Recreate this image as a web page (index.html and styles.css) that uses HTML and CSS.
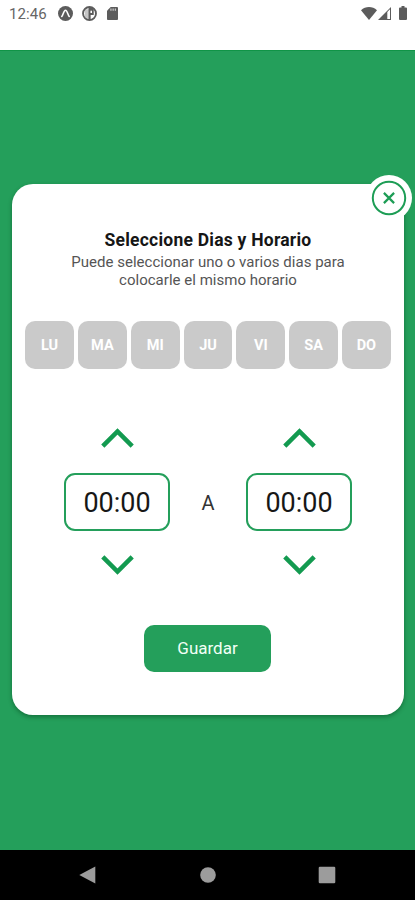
FILE: index.html
```html
<!DOCTYPE html>
<html lang="es">
<head>
<meta charset="utf-8">
<meta name="viewport" content="width=device-width, initial-scale=1">
<title>Seleccione Dias y Horario</title>
<link rel="stylesheet" href="styles.css">
</head>
<body>
<header class="status">
  <span class="clock">12:46</span>
  <svg class="status-icon expo" viewBox="0 0 16 16"><circle cx="8" cy="8" r="8" fill="#5c5c5c"/><path d="M4 11.200C5.400 9.600 6.200 4.500 8 4.500s2.600 5.100 4 6.700" fill="none" stroke="#fff" stroke-width="1.700" stroke-linecap="round"/></svg>
  <svg class="status-icon app" viewBox="0 0 16 16"><circle cx="8" cy="8" r="6.900" fill="#fff" stroke="#5c5c5c" stroke-width="2"/><path d="M3 3.500h5v10H5.500L3 11z" fill="#5c5c5c" opacity=".35"/><path d="M7 2h5.500v7.500H9.200V14H7z" fill="#5c5c5c"/><path d="M9 5h1.700v2.500H9z" fill="#fff"/></svg>
  <svg class="status-icon card-icon" viewBox="0 0 12 14"><path d="M4 0h7q1 0 1 1v12q0 1-1 1H1q-1 0-1-1V4z" fill="#5c5c5c"/><path d="M4.300 1.500v2.500M6.700 1.500v2.500M9.100 1.500v2.500" stroke="#ccc" stroke-width="1.300"/></svg>
  <div class="signals">
    <svg class="wifi" viewBox="0 0 16 13"><path d="M0 3.200C4.500-1 11.500-1 16 3.200L8 13z" fill="#5c5c5c"/></svg>
    <svg class="cell" viewBox="0 0 13 13"><path d="M0 13 13 0v13z" fill="#5c5c5c"/><path d="M9.300 5v7H12V2.300z" fill="#fff"/></svg>
    <svg class="battery" viewBox="0 0 8 14"><path d="M2.500 0h3v1.500H7q1 0 1 1V13q0 1-1 1H1q-1 0-1-1V2.500q0-1 1-1h1.500z" fill="#5c5c5c"/></svg>
  </div>
</header>
<main class="screen">
  <section class="card">
    <button class="close" aria-label="Cerrar"><svg viewBox="0 0 46 46"><circle cx="23" cy="23" r="16.200" fill="none" stroke="#1d9d55" stroke-width="2"/><path d="m17.900 17.900 10.200 10.200m0-10.200L17.900 28.100" fill="none" stroke="#1d9d55" stroke-width="2.200"/></svg></button>
    <h1 class="title">Seleccione Dias y Horario</h1>
    <p class="hint">Puede seleccionar uno o varios dias para<br>colocarle el mismo horario</p>
    <div class="days">
      <button class="day">LU</button><button class="day">MA</button><button class="day">MI</button><button class="day">JU</button><button class="day">VI</button><button class="day">SA</button><button class="day">DO</button>
    </div>
    <div class="times">
      <div class="picker">
        <svg class="arrow" viewBox="0 0 33 20"><path d="M1.800 18.200 16.500 3.500l14.700 14.700"/></svg>
        <div class="time">00:00</div>
        <svg class="arrow" viewBox="0 0 33 20"><path d="M1.800 1.800 16.500 16.500 31.200 1.800"/></svg>
      </div>
      <span class="to">A</span>
      <div class="picker">
        <svg class="arrow" viewBox="0 0 33 20"><path d="M1.800 18.200 16.500 3.500l14.700 14.700"/></svg>
        <div class="time">00:00</div>
        <svg class="arrow" viewBox="0 0 33 20"><path d="M1.800 1.800 16.500 16.500 31.200 1.800"/></svg>
      </div>
    </div>
    <button class="save">Guardar</button>
  </section>
</main>
<nav class="nav">
  <svg viewBox="0 0 18 18"><path d="M16.300.5v17L.3 9z"/></svg>
  <svg viewBox="0 0 18 18"><circle cx="9" cy="9" r="7.800"/></svg>
  <svg viewBox="0 0 18 18"><rect x=".7" y=".7" width="16.600" height="16.600" rx="1.200"/></svg>
</nav>
</body>
</html>
```
FILE: styles.css
```css
* { box-sizing: border-box; }
body {
  margin: 0;
  height: 900px;
  display: flex;
  flex-direction: column;
  font-family: Roboto, "Liberation Sans", sans-serif;
  background: #fff;
}
button { border: 0; padding: 0; font: inherit; }
svg { display: block; flex: none; }
.status {
  height: 50px;
  display: flex;
  align-items: flex-start;
  padding: 0 8px 0 9px;
}
.clock { width: 49px; font-size: 15px; line-height: 28px; letter-spacing: .1px; color: #666; }
.status-icon { width: 15px; height: 15px; margin-top: 6px; }
.app { margin-left: 9px; }
.card-icon { width: 11px; height: 13px; margin: 7px 0 0 10px; }
.signals { display: flex; margin: 7px 0 0 auto; }
.wifi { width: 16px; height: 13px; }
.cell { width: 13px; height: 13px; margin-left: 1px; }
.battery { width: 8px; height: 14px; margin-left: 8px; margin-top: -1px; }
.screen {
  height: 800px;
  padding: 134px 11px 0 12px;
  background: #249f5b;
  border-top: 1px solid #109447;
}
.card {
  position: relative;
  height: 531px;
  margin-top: -1px;
  padding-top: 45px;
  border-radius: 21px;
  background: #fff;
  box-shadow: 0 2px 4px rgba(0, 60, 25, .45);
  display: flex;
  flex-direction: column;
  align-items: center;
}
.close {
  position: absolute;
  top: -9px;
  right: -8px;
  width: 46px;
  height: 46px;
  border-radius: 50%;
  background: #fff;
}
.title { margin: 0; font-size: 17.500px; line-height: 22px; font-weight: 700; letter-spacing: .23px; color: #161616; }
.hint { margin: 2px 0 0; font-size: 15px; line-height: 18px; letter-spacing: .02px; text-align: center; color: #555; }
.days { display: flex; gap: 4px; margin-top: 32px; }
.day {
  width: 48.800px;
  height: 48px;
  border-radius: 10px;
  background: #cacaca;
  color: #fff;
  font-size: 14.500px;
  font-weight: 700;
}
.times { display: flex; align-items: center; margin-top: 59px; }
.picker { width: 106px; display: flex; flex-direction: column; align-items: center; }
.arrow { width: 33px; height: 20px; fill: none; stroke: #139a50; stroke-width: 4.500; }
.time {
  width: 106px;
  height: 58px;
  margin: 25px 0 24px;
  border: 2px solid #249f5b;
  border-radius: 11px;
  font-size: 27px;
  line-height: 56px;
  text-align: center;
  color: #171717;
}
.to { width: 76px; padding-top: 2px; text-align: center; font-size: 20px; color: #333; }
.save {
  width: 127px;
  height: 47px;
  margin: 50px 1px 0 0;
  padding-bottom: 1px;
  border-radius: 10px;
  background: #249f5b;
  color: #f2fff6;
  font-size: 17px;
}
.nav { height: 50px; padding: 0 79px; background: #000; display: flex; align-items: center; justify-content: space-between; }
.nav svg { width: 18px; height: 18px; fill: #9c9c9c; }
```
